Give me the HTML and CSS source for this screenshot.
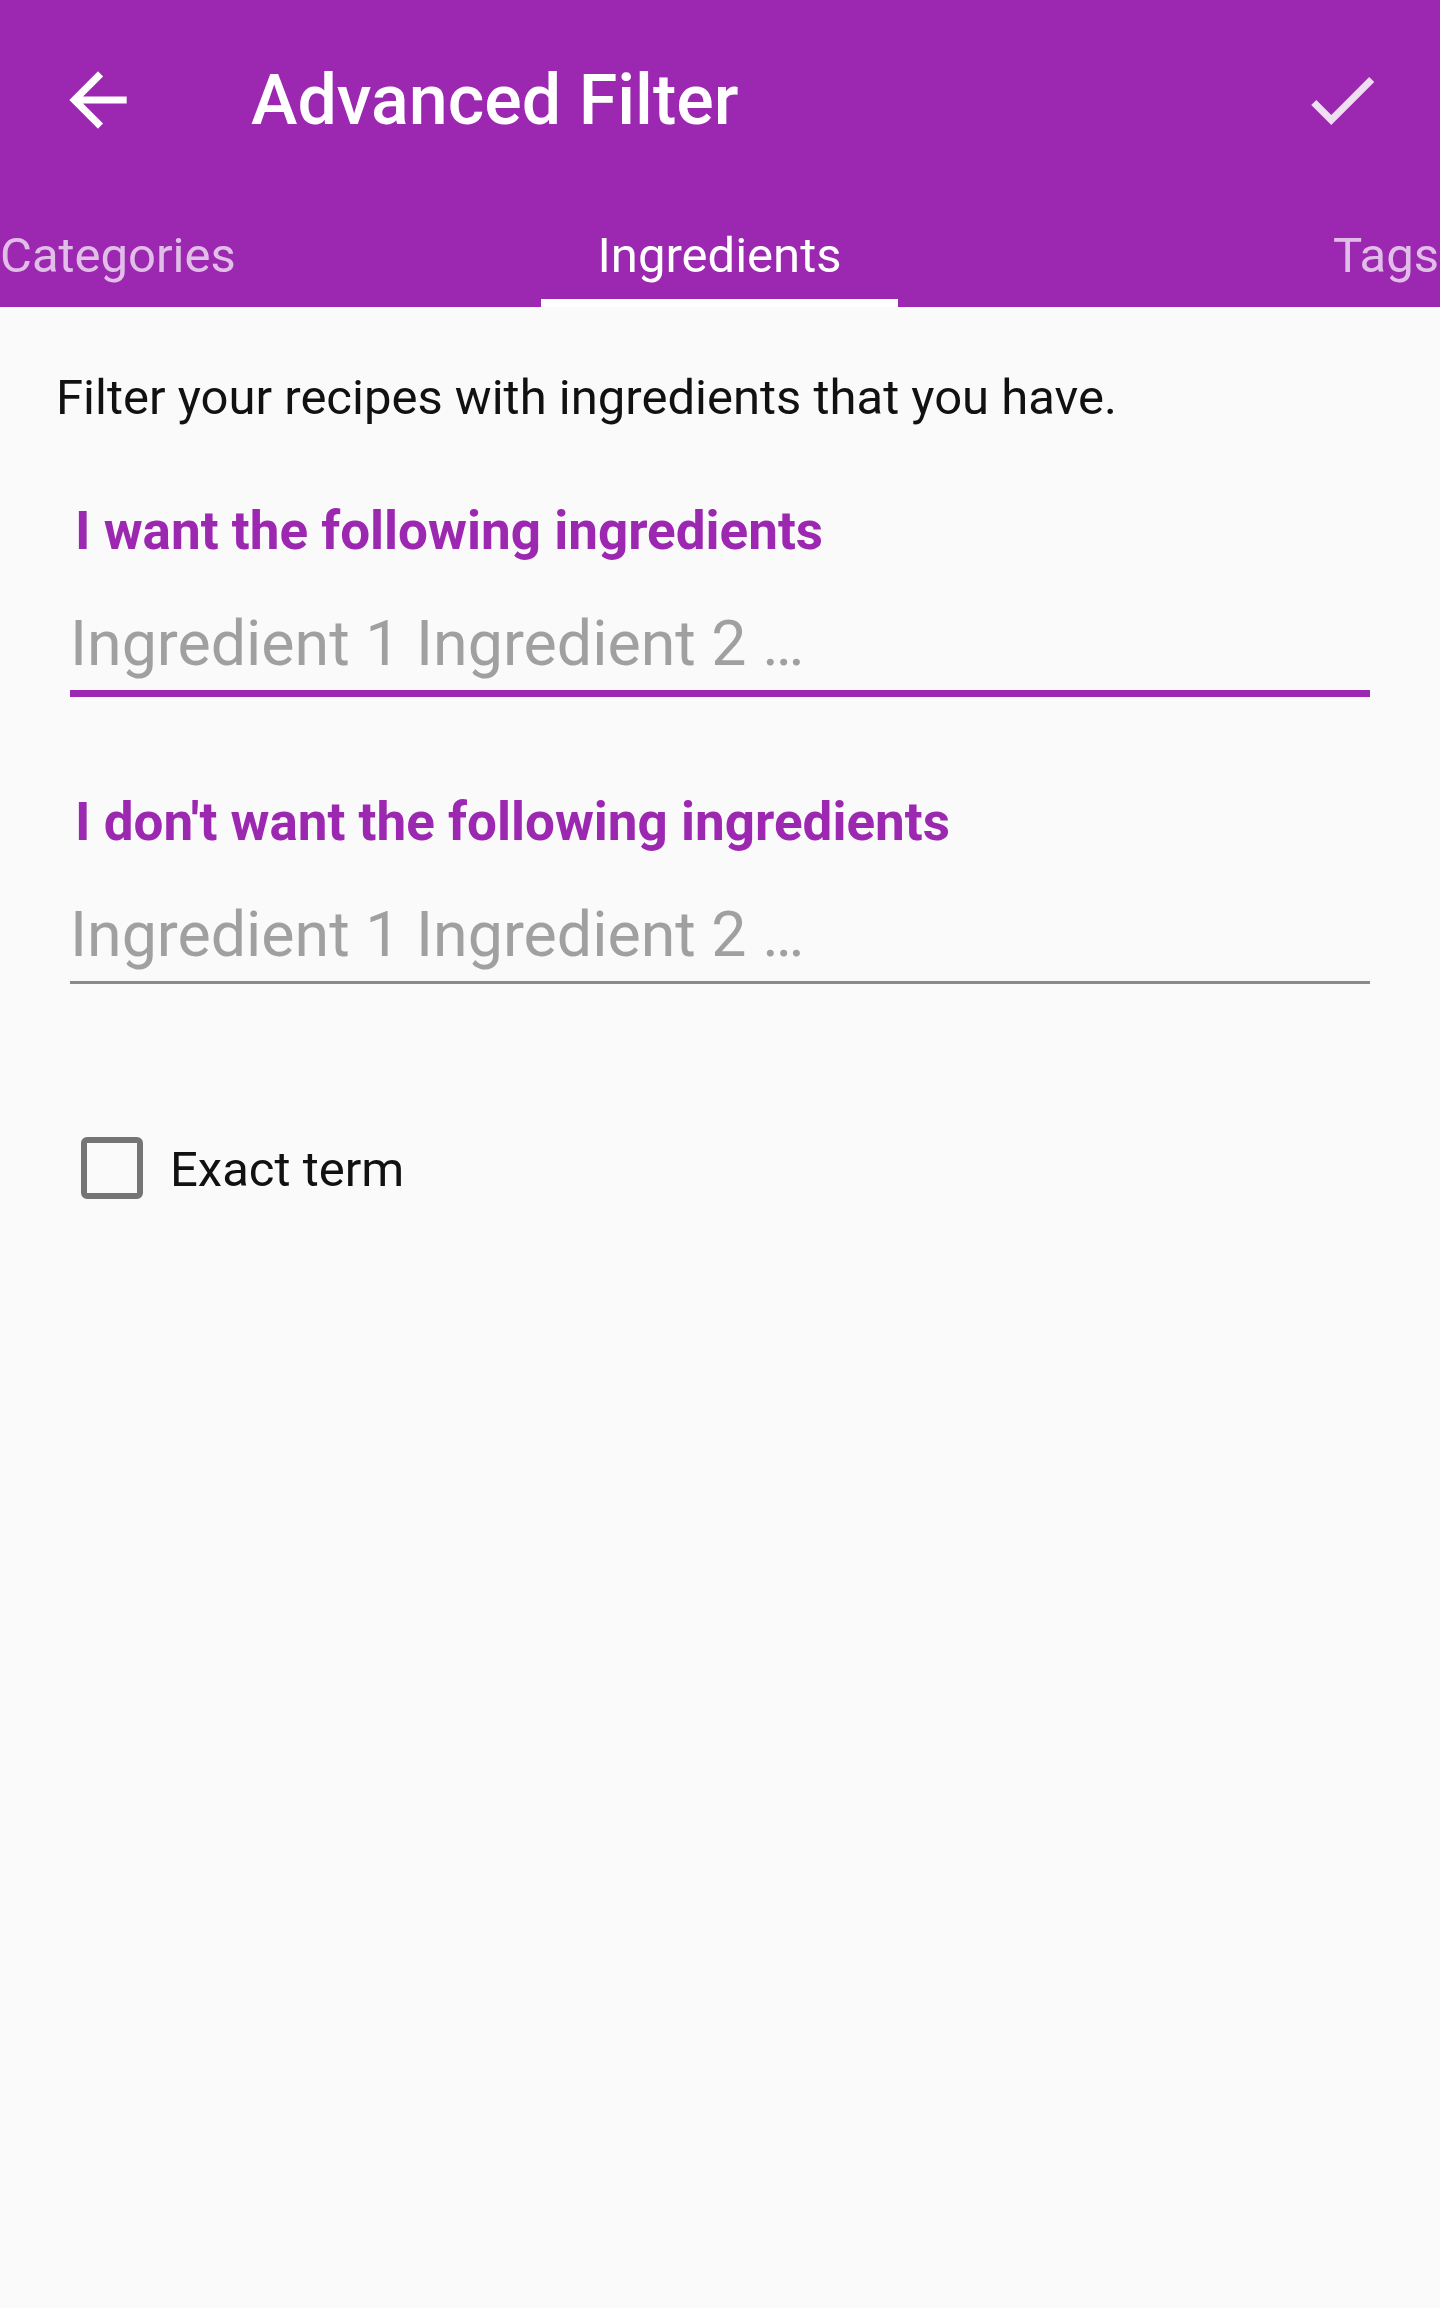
FILE: index.html
```html
<!DOCTYPE html>
<html lang="en">
<head>
<meta charset="utf-8">
<title>Advanced Filter</title>
<link rel="stylesheet" href="styles.css">
</head>
<body>
<header class="appbar">
  <div class="toolbar">
    <svg class="icon-back" viewBox="0 0 24 24" aria-label="Back"><path d="M20 11H7.83l5.59-5.59L12 4l-8 8 8 8 1.41-1.41L7.83 13H20v-2z"/></svg>
    <h1 class="title">Advanced Filter</h1>
    <svg class="icon-check" viewBox="0 0 24 24" aria-label="Apply"><path d="M9 16.17L4.83 12l-1.42 1.41L9 19 21 7l-1.41-1.41z"/></svg>
  </div>
  <nav class="tabs">
    <div class="tab tab-first">Categories</div>
    <div class="tab tab-active">Ingredients</div>
    <div class="tab tab-last">Tags</div>
  </nav>
</header>
<main class="content">
  <p class="intro">Filter your recipes with ingredients that you have.</p>
  <label class="field-label">I want the following ingredients</label>
  <input class="field field-focused" type="text" placeholder="Ingredient 1 Ingredient 2 …">
  <label class="field-label field-label-2">I don't want the following ingredients</label>
  <input class="field" type="text" placeholder="Ingredient 1 Ingredient 2 …">
  <div class="check-row">
    <span class="checkbox"></span>
    <span class="check-text">Exact term</span>
  </div>
</main>
</body>
</html>
```
FILE: styles.css
```css
html, body {
  margin: 0;
  padding: 0;
}
body {
  background: #fafafa;
  font-family: Roboto, "Liberation Sans", sans-serif;
  width: 1440px;
  min-height: 2308px;
  overflow: hidden;
}
.appbar {
  background: #9c27b0;
  height: 307px;
  display: flex;
  flex-direction: column;
}
.toolbar {
  height: 200px;
  display: flex;
  align-items: center;
}
.icon-back {
  width: 86px;
  height: 86px;
  fill: #ffffff;
  margin-left: 55px;
  flex: 0 0 auto;
}
.title {
  margin: 0 0 0 110px;
  font-size: 70px;
  font-weight: 500;
  color: #ffffff;
  line-height: 82px;
  flex: 1 1 auto;
}
.icon-check {
  width: 86px;
  height: 86px;
  fill: rgba(255, 255, 255, 0.85);
  margin-right: 55px;
  flex: 0 0 auto;
}
.tabs {
  height: 107px;
  display: grid;
  grid-template-columns: 541px 357px 1fr;
  overflow: hidden;
}
.tab {
  font-size: 49px;
  line-height: 58px;
  color: rgba(255, 255, 255, 0.7);
  display: flex;
  align-items: center;
  white-space: nowrap;
  padding-top: 4px;
}
.tab-first {
  padding-left: 0;
}
.tab-active {
  color: #ffffff;
  justify-content: center;
  border-bottom: 8px solid #ffffff;
  padding-top: 12px;
}
.tab-last {
  padding-left: 435px;
}
.content {
  padding: 62px 70px 0 56px;
  display: flex;
  flex-direction: column;
}
.intro {
  margin: 0;
  font-size: 49px;
  line-height: 58px;
  color: #111111;
}
.field-label {
  display: block;
  margin: 74px 0 0 19px;
  font-size: 53px;
  line-height: 60px;
  font-weight: 700;
  color: #9c27b0;
}
.field-label-2 {
  margin-top: 95px;
}
.field {
  margin: 47px 0 0 14px;
  padding: 0 0 10px 0;
  border: none;
  border-bottom: 3px solid #8a8a8a;
  background: transparent;
  font-family: Roboto, "Liberation Sans", sans-serif;
  font-size: 62.7px;
  line-height: 72px;
  height: 72px;
  color: #212121;
  outline: none;
  box-sizing: content-box;
}
.field::placeholder {
  color: #a0a0a0;
}
.field-focused {
  border-bottom: 7px solid #9c27b0;
}
.check-row {
  display: flex;
  align-items: center;
  margin: 153px 0 0 25px;
}
.checkbox {
  width: 50px;
  height: 50px;
  border: 6px solid #757575;
  border-radius: 6px;
  flex: 0 0 auto;
}
.check-text {
  margin-left: 27px;
  padding-top: 4px;
  font-size: 49px;
  line-height: 58px;
  color: #111111;
}
```
